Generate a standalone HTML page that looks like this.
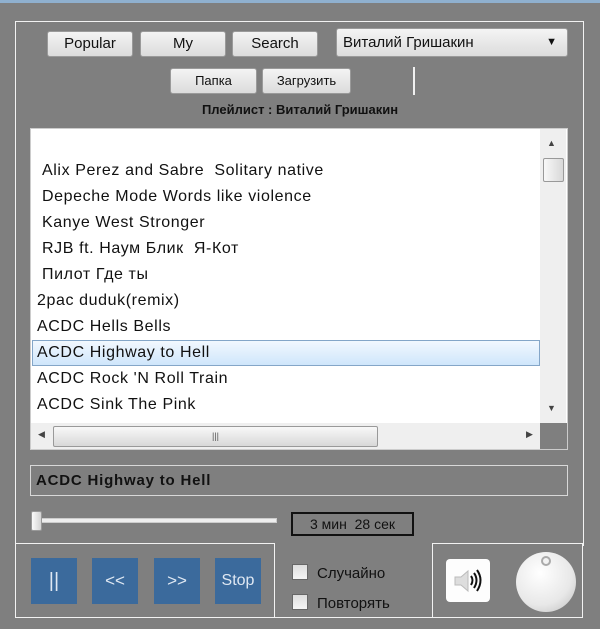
<!DOCTYPE html>
<html><head><meta charset="utf-8"><style>
*{margin:0;padding:0;box-sizing:border-box}
body{width:600px;height:629px;background:#7f7f7f;position:relative;overflow:hidden;font-family:"Liberation Sans","DejaVu Sans",sans-serif}
.a{position:absolute}
.btn{position:absolute;background:linear-gradient(#f4f4f4,#dcdcdc);border:1px solid #9a9a9a;border-radius:3px;font-size:15px;color:#111;text-align:center}
.row{position:absolute;left:37px;font-size:16px;letter-spacing:0.6px;color:#111;height:26px;line-height:26px;white-space:nowrap}
.blue{position:absolute;top:558px;width:46px;height:46px;background:#3b6a9c;color:#dfe8f3;font-size:17px;text-align:center;line-height:46px}
.cb{position:absolute;left:292px;width:16px;height:16px;background:linear-gradient(#ddd,#f4f4f4);border:1px solid #666}
.lab{position:absolute;left:317px;font-size:15px;color:#111}
</style></head><body>
<div class="a" style="left:0;top:0;width:600px;height:3px;background:#8fb0cf"></div>
<div class="a" style="left:15px;top:21px;width:569px;height:525px;border:1px solid #f2f2f2;border-bottom:none"></div>
<div class="btn" style="left:47px;top:31px;width:86px;height:26px;line-height:24px">Popular</div>
<div class="btn" style="left:140px;top:31px;width:86px;height:26px;line-height:24px">My</div>
<div class="btn" style="left:232px;top:31px;width:86px;height:26px;line-height:24px">Search</div>
<div class="btn" style="left:336px;top:28px;width:232px;height:29px;line-height:27px;text-align:left;padding-left:6px">Виталий Гришакин<span class="a" style="right:10px;top:0;font-size:11px">▼</span></div>
<div class="btn" style="left:170px;top:68px;width:87px;height:26px;line-height:24px;font-size:13px">Папка</div>
<div class="btn" style="left:262px;top:68px;width:89px;height:26px;line-height:24px;font-size:13px">Загрузить</div>
<div class="a" style="left:413px;top:67px;width:2px;height:28px;background:#f0f0f0"></div>
<div class="a" style="left:0;top:102px;width:600px;text-align:center;font-size:13px;font-weight:bold;color:#111">Плейлист : Виталий Гришакин</div>
<div class="a" style="left:30px;top:128px;width:538px;height:322px;background:#fff;border:1px solid #ccc"></div>
<div class="a" style="left:32px;top:340px;width:508px;height:26px;background:linear-gradient(#f2f8fe,#cfe6fb);border:1px solid #84a6c8"></div>
<div class="row" style="left:42px;top:158px">Alix Perez and Sabre&nbsp; Solitary native</div>
<div class="row" style="left:42px;top:184px">Depeche Mode Words like violence</div>
<div class="row" style="left:42px;top:210px">Kanye West Stronger</div>
<div class="row" style="left:42px;top:236px">RJB ft. Наум Блик&nbsp; Я-Кот</div>
<div class="row" style="left:42px;top:262px">Пилот Где ты</div>
<div class="row" style="top:288px">2pac duduk(remix)</div>
<div class="row" style="top:314px">ACDC Hells Bells</div>
<div class="row" style="top:340px">ACDC Highway to Hell</div>
<div class="row" style="top:366px">ACDC Rock 'N Roll Train</div>
<div class="row" style="top:392px">ACDC Sink The Pink</div>
<div class="a" style="left:540px;top:129px;width:26px;height:294px;background:#efefef"></div>
<div class="a" style="left:547px;top:138px;font-size:9px;color:#444">▲</div>
<div class="a" style="left:543px;top:158px;width:21px;height:24px;background:linear-gradient(90deg,#f8f8f8,#d8d8d8);border:1px solid #999;border-radius:2px"></div>
<div class="a" style="left:547px;top:403px;font-size:9px;color:#444">▼</div>
<div class="a" style="left:31px;top:423px;width:509px;height:26px;background:#efefef"></div>
<div class="a" style="left:38px;top:429px;font-size:9px;color:#444">◀</div>
<div class="a" style="left:526px;top:429px;font-size:9px;color:#444">▶</div>
<div class="a" style="left:53px;top:426px;width:325px;height:21px;background:linear-gradient(#f8f8f8,#d8d8d8);border:1px solid #999;border-radius:2px;text-align:center;font-size:9px;line-height:19px;color:#555">|||</div>
<div class="a" style="left:540px;top:423px;width:27px;height:26px;background:#7f7f7f"></div>
<div class="a" style="left:30px;top:465px;width:538px;height:31px;border:1px solid #d8d8d8"></div>
<div class="a" style="left:36px;top:472px;font-size:15px;font-weight:bold;letter-spacing:0.8px;color:#111">ACDC Highway to Hell</div>
<div class="a" style="left:32px;top:518px;width:245px;height:5px;background:#eee;border:1px solid #ccc"></div>
<div class="a" style="left:31px;top:511px;width:11px;height:20px;background:linear-gradient(90deg,#fafafa,#d4d4d4);border:1px solid #999;border-radius:2px"></div>
<div class="a" style="left:291px;top:512px;width:123px;height:24px;border:2px solid #111;text-align:center;font-size:14px;line-height:20px;color:#111">3 мин&nbsp; 28 сек</div>
<div class="a" style="left:15px;top:543px;width:260px;height:75px;border:1px solid #f2f2f2"></div>
<div class="a" style="left:432px;top:543px;width:151px;height:75px;border:1px solid #f2f2f2"></div>
<div class="a" style="left:275px;top:617px;width:157px;height:1px;background:#f2f2f2"></div>
<div class="blue" style="left:31px;font-size:20px">||</div>
<div class="blue" style="left:92px">&lt;&lt;</div>
<div class="blue" style="left:154px">&gt;&gt;</div>
<div class="blue" style="left:215px;font-size:16px">Stop</div>
<div class="cb" style="top:564px"></div><div class="lab" style="top:565px">Случайно</div>
<div class="cb" style="top:594px"></div><div class="lab" style="top:595px">Повторять</div>
<div class="a" style="left:446px;top:559px;width:44px;height:43px;background:#fdfdfd;border-radius:4px">
<svg width="44" height="43" viewBox="0 0 44 43"><path d="M9 18h6l7-6v20l-7-6H9z" fill="#ddd" stroke="#bbb"/><path d="M25 17q3 4 0 9M28 14q5 7 0 15M31 11q7 10 0 21" fill="none" stroke="#111" stroke-width="2"/></svg></div>
<div class="a" style="left:516px;top:552px;width:60px;height:60px;border-radius:50%;background:radial-gradient(circle at 40% 35%,#fff,#e8e8e8 60%,#bbb);"></div>
<div class="a" style="left:541px;top:556px;width:10px;height:10px;border-radius:50%;border:2px solid #aaa;background:#f2f2f2"></div>
</body></html>
